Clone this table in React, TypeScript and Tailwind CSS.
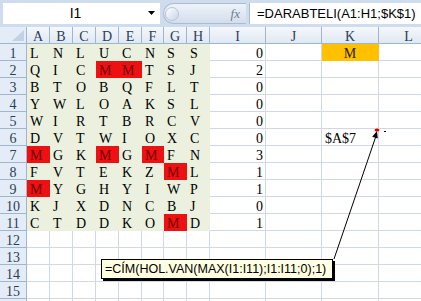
import React from "react";

const colLetters = ["A", "B", "C", "D", "E", "F", "G", "H", "I", "J", "K", "L"];

const letters: string[] = [
  "LNLUCNSS",
  "QICMMTSJ",
  "BTOBQFLT",
  "YWLOAKSL",
  "WIRTBRCV",
  "DVTWIOXC",
  "MGKMGMFN",
  "FVTEKZML",
  "MYGHYIWP",
  "KJXDNCBJ",
  "CTDDKOMD",
];
const red: Record<string, boolean> = {
  "1-3": true,
  "1-4": true,
  "6-0": true,
  "6-3": true,
  "6-5": true,
  "7-6": true,
  "8-0": true,
  "10-6": true,
};
const counts = [0, 2, 0, 0, 0, 0, 3, 1, 1, 0, 1];

function Cell({ children, className }: { children?: React.ReactNode; className: string }) {
  return <div className={"h-[17px] leading-[19px] whitespace-nowrap overflow-visible " + className}>{children}</div>;
}

export default function App() {
  const rows: React.ReactNode[] = [];
  rows.push(
    <div key="corner" className="h-[17px] bg-[#e4ecf7] border-r border-b border-[#9eb6ce] relative">
      <svg width="27" height="17" className="absolute left-0 top-0">
        <polygon points="24,3 24,14 12,14" fill="#c3d1e4" />
      </svg>
    </div>
  );
  colLetters.forEach((c) => {
    rows.push(
      <div
        key={"h" + c}
        className="h-[17px] leading-[19px] text-center text-[#2b3e57] bg-gradient-to-b from-[#f5f8fc] to-[#e0e8f3] border-r border-b border-[#9eb6ce]"
      >
        {c}
      </div>
    );
  });
  for (let r = 0; r < 16; r++) {
    rows.push(
      <div
        key={"r" + r}
        className="h-[17px] leading-[19px] text-center text-[#2b3e57] bg-[#e4ecf7] border-r border-b border-[#9eb6ce]"
      >
        {r < 15 ? r + 1 : ""}
      </div>
    );
    for (let c = 0; c < 12; c++) {
      const key = r + "-" + c;
      if (r < 11 && c < 8) {
        const isRed = red[key];
        rows.push(
          <Cell key={key} className={(isRed ? "bg-[#ee1111] text-[#6e0000]" : "bg-[#ebf1de] text-black") + " pl-[3px]"}>
            {letters[r][c]}
          </Cell>
        );
      } else if (r < 11 && c === 8) {
        rows.push(
          <Cell key={key} className="bg-white border-r border-b border-[#d0d7e5] text-right pr-[2px] text-black">
            {counts[r]}
          </Cell>
        );
      } else if (r === 0 && c === 10) {
        rows.push(
          <Cell key={key} className="bg-[#ffc000] border-r border-b border-[#ffc000] text-center text-[#2a1a00]">
            M
          </Cell>
        );
      } else if (r === 5 && c === 10) {
        rows.push(
          <Cell key={key} className="bg-white border-r border-b border-[#d0d7e5] pl-[3px] text-black">
            $A$7
          </Cell>
        );
      } else {
        rows.push(<Cell key={key} className="bg-white border-r border-b border-[#d0d7e5]" />);
      }
    }
  }

  return (
    <div
      className="w-[421px] h-[301px] overflow-hidden relative bg-[#cfdcee] text-[14px]"
      style={{ fontFamily: '"Liberation Serif", "Times New Roman", serif' }}
    >
      <div className="h-[27px] flex items-start pt-[3px] pl-[3px] gap-[3px]">
        <div className="w-[157px] h-[21px] bg-white flex items-center">
          <div
            className="flex-1 text-center text-[14px] text-black leading-[21px]"
            style={{ fontFamily: '"Liberation Sans", Arial, sans-serif' }}
          >
            I1
          </div>
          <svg width="8" height="5" className="mr-[4px]">
            <polygon points="0,0 7,0 3.5,4" fill="#000" />
          </svg>
        </div>
        <div className="w-[83px] h-[21px] rounded-l-full bg-gradient-to-b from-[#eef3f9] to-[#d3deec] border border-[#a9bcd4] border-r-0 flex items-center relative">
          <div className="ml-[1px] w-[14px] h-[14px] rounded-full bg-gradient-to-br from-white to-[#c9d6e7] border border-[#b6c6da]" />
          <div className="flex-1" />
          <span
            className="mr-[6px] italic text-[13px] text-[#6f7c8c]"
            style={{ fontFamily: '"Liberation Serif", serif' }}
          >
            fx
          </span>
        </div>
        <div className="flex-1 h-[21px] bg-white border-l border-[#a9bcd4] flex items-center pl-[7px]">
          <span className="text-[13px] text-black" style={{ fontFamily: '"Liberation Sans", Arial, sans-serif' }}>
            =DARABTELI(A1:H1;$K$1)
          </span>
        </div>
      </div>

      <div className="flex">
        <div className="w-[2px] bg-[#b7c9e1]" />
        <div className="grid grid-cols-[27px_23px_23px_23px_23px_23px_22px_23px_23px_56px_56px_57px_60px] bg-white">
          {rows}
        </div>
      </div>

      <svg width="421" height="301" className="absolute left-0 top-0 pointer-events-none">
        <line x1="334" y1="259" x2="376" y2="136" stroke="#000" strokeWidth="1" />
        <polygon points="377,131 377.8,138.6 372.2,136.7" fill="#000" />
        <ellipse cx="377" cy="130" rx="2.5" ry="1.6" fill="#e00000" />
        <line x1="384" y1="131.5" x2="386" y2="131.5" stroke="#000" strokeWidth="1" />
      </svg>

      <div
        className="absolute left-[101px] top-[259px] w-[232px] h-[20px] bg-[#ffffe1] border border-black shadow-[2px_2px_0_#000] text-[12.5px] leading-[18px] pl-[3px] text-black whitespace-nowrap"
        style={{ fontFamily: '"Liberation Sans", Arial, sans-serif' }}
      >
        =CÍM(HOL.VAN(MAX(I1:I11);I1:I11;0);1)
      </div>
    </div>
  );
}
